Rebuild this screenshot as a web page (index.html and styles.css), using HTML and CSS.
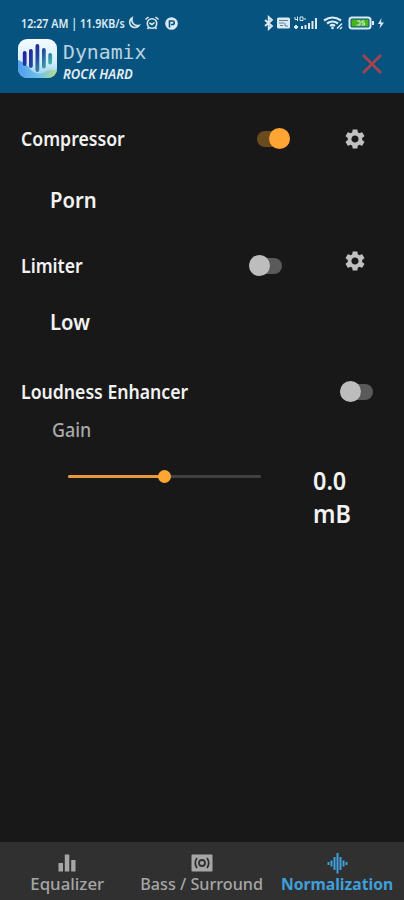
FILE: index.html
```html
<!DOCTYPE html>
<html lang="en">
<head>
    <meta charset="UTF-8">
    <meta name="viewport" content="width=device-width, initial-scale=1.0">
    <title>Dynamix</title>
    <link rel="stylesheet" href="styles.css">
</head>

<body>
    <div class="app">
        <!-- Header -->
        <header class="header">
            <div class="status-bar">
                <span class="status-time">12:27 AM | 11.9KB/s</span>
                <svg class="status-left" width="54" height="16" viewBox="0 0 54 16" fill="none" stroke="#dcebf3" stroke-width="1.6">
                    <path d="M6 3A5.2 5.2 0 1 0 13 10.500A6 6 0 0 1 6 3Z"/>
                    <circle cx="26" cy="8.500" r="4.700"/>
                    <path d="M19.500 4.500L22.500 2M32.500 4.500L29.500 2M23.500 8L26 9.500L28.500 7.500M22.500 12.500L21.500 14M29.500 12.500L30.500 14"/>
                    <circle cx="45.500" cy="8.500" r="6.300" fill="#dcebf3" stroke="none"/>
                    <path d="M43.500 12.500V6H46.500A1.700 1.700 0 0 1 46.500 9.500H45" stroke="#07537f"/>
                </svg>
                <svg class="status-right" width="121" height="16" viewBox="0 0 121 16" fill="none" stroke="#dcebf3" stroke-width="1.500">
                    <path d="M1 5L8 11L4.700 14V2L8 5L1 11" stroke-width="1.800"/>
                    <rect x="13" y="2.500" width="13" height="11" rx="1.500" fill="#dcebf3" stroke="none"/>
                    <path d="M15 5.500H24M15 8H20M16 10.500H19M21 8V11H24" stroke="#547f9b" stroke-width="1"/>
                    <path d="M31 2V4.500H34M33.500 1.500V6M36 2H39V5.500H36ZM40 4H42" stroke-width="1"/>
                    <path d="M30 12H34M32 10V14M38 14V11M41.500 14V10M45 14V8M48.500 14V6M52 14V3" stroke-width="2"/>
                    <path d="M60 5.500Q68.500 -.5 77 5.500M63 8.500Q68.500 4.500 74 8.500M66 11Q68.500 9 71 11" stroke-width="2.200"/>
                    <circle cx="68.500" cy="13" r="1.300" fill="#dcebf3" stroke="none"/>
                    <path d="M73 13.500L78 8.500M76 14L78 12"/>
                    <rect x="85.500" y="2.500" width="21" height="11" rx="2.500" fill="#07537f" stroke-width="2"/>
                    <rect x="87.500" y="4.500" width="17" height="7" fill="#44b51b" stroke="none"/>
                    <path d="M93 6H96V10H92.500M100.500 6H98V8H100.500V10H97.500" stroke-width="1"/>
                    <path d="M109 6V10" stroke-width="2"/>
                    <path d="M117.500 3L114 9H116.500L115.500 13.500L120 7.500H117Z" fill="#dcebf3" stroke="none"/>
                </svg>
            </div>
            <div class="title-bar">
                <svg class="logo" width="39" height="39" viewBox="0 0 39 39">
                    <defs>
                        <linearGradient id="logo-bg" x1="0" y1="0" x2="0" y2="1">
                            <stop offset="0" stop-color="#f4fbff"/>
                            <stop offset=".6" stop-color="#d4effa"/>
                            <stop offset="1" stop-color="#8ccaf2"/>
                        </linearGradient>
                        <linearGradient id="logo-wave" x1="0" y1="0" x2="1" y2="0">
                            <stop offset="0" stop-color="#4f9ef0"/>
                            <stop offset=".55" stop-color="#72c3ea"/>
                            <stop offset="1" stop-color="#b9dc85"/>
                        </linearGradient>
                        <linearGradient id="logo-bars" gradientUnits="userSpaceOnUse" x1="8" y1="8" x2="32" y2="26">
                            <stop offset="0" stop-color="#2719a0"/>
                            <stop offset=".5" stop-color="#23439f"/>
                            <stop offset="1" stop-color="#41b5aa"/>
                        </linearGradient>
                        <clipPath id="logo-shape"><rect width="39" height="39" rx="9"/></clipPath>
                    </defs>
                    <g clip-path="url(#logo-shape)">
                        <rect width="39" height="39" fill="url(#logo-bg)"/>
                        <path d="M0 21Q8 24 13 31Q19 37 27 33Q33 29 39 32V39H0Z" fill="url(#logo-wave)"/>
                        <path d="M4.800 14a1.900 1.900 0 0 1 3.800 0V25a1.900 1.900 0 0 1-3.800 0ZM11 12a1.900 1.900 0 0 1 3.800 0V27a1.900 1.900 0 0 1-3.800 0ZM17.500 7a1.900 1.900 0 0 1 3.800 0V31a1.900 1.900 0 0 1-3.800 0ZM24 11a1.900 1.900 0 0 1 3.800 0V27.500a1.900 1.900 0 0 1-3.800 0ZM30.300 16a1.900 1.900 0 0 1 3.800 0V23.500a1.900 1.900 0 0 1-3.800 0Z" fill="url(#logo-bars)"/>
                    </g>
                </svg>
                <div class="titles">
                    <h1 class="app-name">Dynamix</h1>
                    <p class="preset">ROCK HARD</p>
                </div>
                <svg class="close" width="20" height="20" viewBox="0 0 20 20" stroke="#a6434e" stroke-width="2.800">
                    <path d="M1 1L19 19M19 1L1 19"/>
                </svg>
            </div>
        </header>

        <!-- Normalization settings -->
        <main class="content">
            <section class="effect">
                <div class="effect-row">
                    <h2 class="effect-name">Compressor</h2>
                    <span class="switch switch-on"></span>
                    <svg class="gear" width="24" height="24" viewBox="0 0 24 24">
                        <path d="M19.140 12.940c.04-.3.06-.61.06-.94s-.02-.64-.07-.94l2.030-1.580c.18-.14.23-.41.12-.61l-1.920-3.320c-.12-.22-.37-.29-.59-.22l-2.390.96c-.5-.38-1.030-.7-1.620-.94l-.36-2.540c-.04-.24-.24-.41-.48-.41h-3.840c-.24 0-.43.17-.47.41l-.36 2.540c-.59.24-1.130.57-1.620.94l-2.390-.96c-.22-.08-.47 0-.59.22L2.740 8.870c-.12.21-.08.47.12.61l2.030 1.580c-.05.3-.09.63-.09.94s.02.64.07.94l-2.030 1.580c-.18.14-.23.41-.12.61l1.920 3.320c.12.22.37.29.59.22l2.390-.96c.5.38 1.030.7 1.620.94l.36 2.540c.05.24.24.41.48.41h3.840c.24 0 .44-.17.47-.41l.36-2.540c.59-.24 1.130-.56 1.620-.94l2.390.96c.22.08.47 0 .59-.22l1.920-3.320c.12-.22.07-.47-.12-.61l-2.010-1.580zM12 15.600c-1.980 0-3.600-1.620-3.600-3.600s1.620-3.600 3.600-3.600 3.600 1.620 3.600 3.600-1.620 3.600-3.600 3.600z"/>
                    </svg>
                </div>
                <p class="effect-value">Porn</p>
            </section>

            <section class="effect effect-limiter">
                <div class="effect-row">
                    <h2 class="effect-name">Limiter</h2>
                    <span class="switch"></span>
                    <svg class="gear gear-raised" width="24" height="24" viewBox="0 0 24 24">
                        <path d="M19.140 12.940c.04-.3.06-.61.06-.94s-.02-.64-.07-.94l2.030-1.580c.18-.14.23-.41.12-.61l-1.920-3.320c-.12-.22-.37-.29-.59-.22l-2.390.96c-.5-.38-1.030-.7-1.620-.94l-.36-2.540c-.04-.24-.24-.41-.48-.41h-3.840c-.24 0-.43.17-.47.41l-.36 2.540c-.59.24-1.130.57-1.620.94l-2.390-.96c-.22-.08-.47 0-.59.22L2.740 8.870c-.12.21-.08.47.12.61l2.030 1.580c-.05.3-.09.63-.09.94s.02.64.07.94l-2.030 1.580c-.18.14-.23.41-.12.61l1.920 3.320c.12.22.37.29.59.22l2.390-.96c.5.38 1.030.7 1.620.94l.36 2.540c.05.24.24.41.48.41h3.840c.24 0 .44-.17.47-.41l.36-2.540c.59-.24 1.130-.56 1.620-.94l2.390.96c.22.08.47 0 .59-.22l1.920-3.320c.12-.22.07-.47-.12-.61l-2.010-1.580zM12 15.600c-1.980 0-3.600-1.620-3.600-3.600s1.620-3.600 3.600-3.600 3.600 1.620 3.600 3.600-1.620 3.600-3.600 3.600z"/>
                    </svg>
                </div>
                <p class="effect-value">Low</p>
            </section>

            <section class="effect effect-loudness">
                <div class="effect-row">
                    <h2 class="effect-name">Loudness Enhancer</h2>
                    <span class="switch switch-end"></span>
                </div>
                <p class="gain-label">Gain</p>
                <div class="gain-row">
                    <div class="slider">
                        <span class="slider-fill" style="width: 50%"></span>
                        <span class="slider-thumb"></span>
                    </div>
                    <p class="gain-value">0.0<br>mB</p>
                </div>
            </section>
        </main>

        <!-- Bottom navigation -->
        <nav class="tabs">
            <a class="tab" href="#equalizer">
                <svg width="24" height="24" viewBox="0 0 24 24" fill="currentColor">
                    <path d="M3.500 12H8V20.500H3.500ZM9.800 3.500H14.300V20.500H9.800ZM16.200 9H20.500V20.500H16.200Z"/>
                </svg>
                <span class="tab-label tab-label-wide">Equalizer</span>
            </a>
            <a class="tab" href="#bass">
                <svg width="24" height="24" viewBox="0 0 24 24">
                    <rect x="1.500" y="3.500" width="21" height="17" rx="1" fill="currentColor"/>
                    <g fill="none" stroke="#303030" stroke-width="1.800">
                        <circle cx="12" cy="12" r="3"/>
                        <path d="M7 7Q3.500 12 7 17M17 7Q20.500 12 17 17"/>
                    </g>
                </svg>
                <span class="tab-label">Bass / Surround</span>
            </a>
            <a class="tab tab-active" href="#normalization">
                <svg width="24" height="24" viewBox="0 0 24 24" stroke="currentColor" stroke-width="2">
                    <path d="M3.500 11V14M6.500 9.500V15.500M9.500 6V19M12.500 2V22.500M15.500 6V19M18.500 9.500V15.500M21.500 11V14"/>
                </svg>
                <span class="tab-label">Normalization</span>
            </a>
        </nav>
    </div>
</body>
</html>
```
FILE: styles.css
```css
/* ====== Base Styles ====== */
* {
    box-sizing: border-box;
    margin: 0;
    padding: 0;
}

body {
    font-family: "Noto Sans", sans-serif;
    color: #f2f2f2;
    background-color: #181818;
}

svg {
    display: block;
    flex-shrink: 0;
}

.app {
    display: flex;
    flex-direction: column;
    height: 900px;
    overflow: hidden;
}

/* ====== Header ====== */
.header {
    height: 93px;
    padding-top: 14px;
    background-color: #07537f;
}

.status-bar {
    display: flex;
    align-items: center;
    height: 18px;
    padding: 0 19px 0 21px;
}

.status-time {
    width: 104px;
    font-size: 13px;
    font-weight: 600;
    white-space: nowrap;
    color: #dcebf3;
    transform: scaleX(0.825);
    transform-origin: left;
}

.status-left {
    margin-left: 1px;
}

.status-right {
    margin-left: auto;
}

.title-bar {
    display: flex;
    align-items: flex-start;
    padding: 7px 22px 0 18px;
}

.titles {
    flex: 1;
    padding-left: 6px;
}

.app-name {
    padding-top: 1px;
    font-family: "DejaVu Sans Mono", monospace;
    font-size: 20px;
    font-weight: 400;
    line-height: 25px;
    color: #b9d3e2;
    transform: scaleX(0.99);
    transform-origin: left;
}

.preset {
    font-size: 14px;
    font-style: italic;
    font-weight: 600;
    line-height: 17px;
    color: #e3eff5;
    transform: scaleX(0.93);
    transform-origin: left;
}

.close {
    margin-top: 15px;
}

/* ====== Effects ====== */
.content {
    flex: 1;
    padding: 31px 0 0 21px;
}

.effect {
    height: 127px;
}

.effect-row {
    display: flex;
    align-items: center;
    height: 30px;
}

.effect-name {
    width: 228px;
    padding-bottom: 2px;
    font-size: 19.5px;
    font-weight: 600;
    white-space: nowrap;
    transform: scaleX(0.905);
    transform-origin: left;
}

.effect-value {
    margin: 30px 0 0 29px;
    font-size: 22px;
    font-weight: 600;
    line-height: 30px;
    transform: scaleX(0.92);
    transform-origin: left;
}

.effect-limiter .effect-value {
    margin-top: 25px;
}

.gear {
    margin-left: 61px;
    fill: #c0c0c0;
}

.gear-raised {
    margin-bottom: 10px;
}

/* ====== Switch ====== */
.switch {
    position: relative;
    width: 33px;
    height: 16px;
    background: #5a5a5a;
    border-radius: 8px;
}

.switch::after {
    content: "";
    position: absolute;
    top: -3px;
    left: 0;
    width: 21px;
    height: 21px;
    border-radius: 50%;
    background: #bdbdbd;
}

.switch-on {
    left: 8px;
    background: #6b4a1e;
}

.switch-on::after {
    left: auto;
    right: 0;
    background: #ffa534;
}

.switch-end {
    margin-left: 91px;
}

/* ====== Gain ====== */
.effect-loudness {
    margin-top: -1px;
}

.gain-label {
    margin: 8px 0 0 31px;
    font-size: 19px;
    font-weight: 500;
    line-height: 30px;
    color: #aaa;
    transform: scaleX(0.94);
    transform-origin: left;
}

.gain-row {
    display: flex;
    align-items: flex-start;
    padding: 19px 0 0 47px;
}

.slider {
    position: relative;
    width: 193px;
    height: 3px;
    margin-top: 11px;
    background: #414141;
    border-radius: 2px;
}

.slider-fill {
    display: block;
    height: 3px;
    background: #e89a3a;
    border-radius: 2px;
}

.slider-thumb {
    position: absolute;
    top: -5px;
    left: 50%;
    width: 13px;
    height: 13px;
    margin-left: -6.5px;
    border-radius: 50%;
    background: #ffa534;
}

.gain-value {
    margin-left: 52px;
    font-size: 26px;
    font-weight: 600;
    line-height: 33px;
    transform: scaleX(0.9);
    transform-origin: left;
}

/* ====== Bottom navigation ====== */
.tabs {
    display: grid;
    grid-template-columns: repeat(3, 1fr);
    height: 58px;
    background: #303030;
}

.tab {
    display: flex;
    flex-direction: column;
    align-items: center;
    padding-top: 9px;
    color: #a6a6a6;
    text-decoration: none;
}

.tab-label {
    margin-top: -1px;
    font-size: 16.5px;
    font-weight: 500;
    line-height: 20px;
    white-space: nowrap;
    transform: scaleX(0.98);
}

.tab-label-wide {
    transform: scaleX(1.02);
}

.tab-active {
    color: #3f9fda;
}

.tab-active .tab-label {
    font-weight: 700;
    transform: scaleX(0.95);
}
```
